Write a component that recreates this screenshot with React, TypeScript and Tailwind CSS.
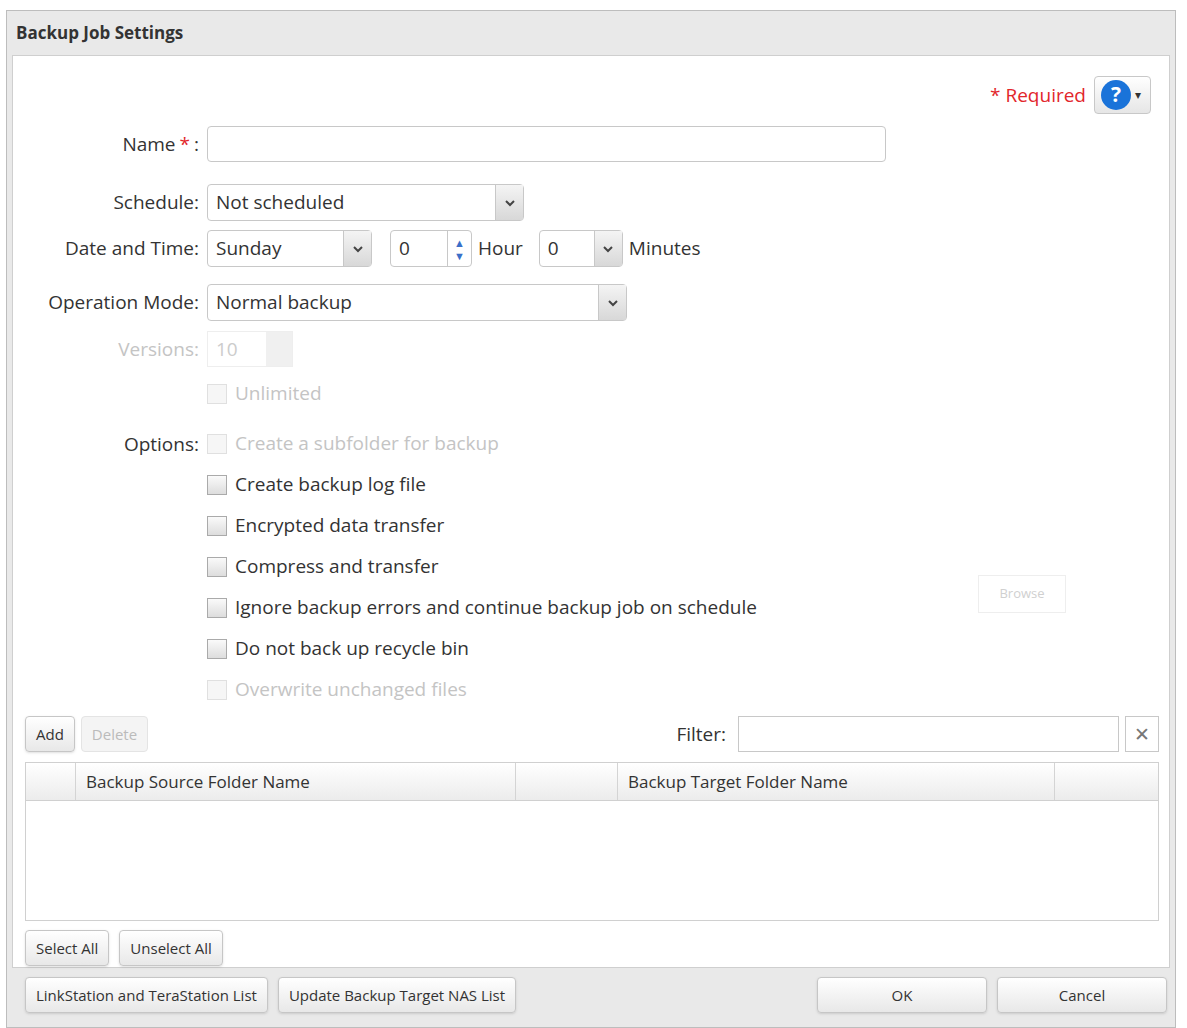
import React from "react";

const Chev = () => (
    <svg width="12" height="8" viewBox="0 0 12 8"><path d="M2 2l4 4 4-4" stroke="#444" strokeWidth="2" fill="none"/></svg>
);

const Select = ({value, w}: {value: string, w: string}) => (
    <div className={`flex h-[37px] ${w} border border-[#c8c8c8] rounded-sm bg-white`}>
        <span className="flex-1 flex items-center pl-2 text-[#333]">{value}</span>
        <span className="w-[28px] flex items-center justify-center bg-gradient-to-b from-[#f4f4f4] to-[#d8d8d8] border-l border-[#c8c8c8]"><Chev/></span>
    </div>
);

const Check = ({label, disabled}: {label: string, disabled?: boolean}) => (
    <div className={`flex items-center gap-[8px] h-[41px] ${disabled ? "text-[#c4c4c4]" : "text-[#333]"}`}>
        <span className={`w-[20px] h-[20px] border ${disabled ? "border-[#e0e0e0] bg-[#f6f6f6]" : "border-[#aaa] bg-gradient-to-b from-[#fafafa] to-[#ddd]"}`}/>
        {label}
    </div>
);

const Btn = ({children, w, disabled}: {children: React.ReactNode, w?: string, disabled?: boolean}) => (
    <button className={`h-[36px] px-[10px] ${w ?? ""} border rounded-sm text-[15px] ${disabled ? "border-[#e4e4e4] text-[#bbb] bg-[#f4f4f4]" : "border-[#c6c6c6] text-[#333] bg-gradient-to-b from-white to-[#e8e8e8] shadow-sm"}`}>{children}</button>
);

export default function App() {
    return (
        <div className="w-[1187px] h-[1028px] bg-white pt-[10px] pl-[6px] pr-[11px]" style={{fontFamily: '"Open Sans", "Noto Sans", sans-serif'}}>
            <div className="h-[1018px] bg-[#e9e9e9] border border-[#bdbdbd] flex flex-col">
                <div className="h-[44px] flex items-center pl-[9px] font-bold text-[17px] text-[#333]">Backup Job Settings</div>
                <div className="mx-[5px] h-[913px] bg-white border border-[#cfcfcf] relative text-[19px] text-[#333]">
                    <div className="flex justify-end items-center gap-[8px] pt-[18px] pr-[18px] h-[60px]">
                        <span className="text-[#e2262b]">* Required</span>
                        <span className="flex items-center gap-[4px] h-[38px] w-[57px] px-[6px] border border-[#c8c8c8] rounded bg-gradient-to-b from-white to-[#e6e6e6]">
                            <span className="w-[30px] h-[30px] rounded-full bg-[#1a73d9] text-white font-bold text-[21px] flex items-center justify-center">?</span>
                            <span className="text-[12px]">▾</span>
                        </span>
                    </div>
                    <div className="grid grid-cols-[186px_1fr] gap-x-[8px] items-center">
                        <div className="text-right h-[36px] mt-[10px] flex items-center justify-end">Name <span className="text-[#e2262b] mx-[4px]">*</span>:</div>
                        <div className="mt-[10px] h-[36px] w-[679px] border border-[#c8c8c8] rounded-sm"/>
                        <div className="text-right mt-[22px]">Schedule:</div>
                        <div className="mt-[22px]"><Select value="Not scheduled" w="w-[317px]"/></div>
                        <div className="text-right mt-[9px]">Date and Time:</div>
                        <div className="mt-[9px] flex items-center gap-[6px]">
                            <Select value="Sunday" w="w-[165px]"/>
                            <div className="ml-[12px] flex h-[37px] w-[82px] border border-[#c8c8c8] rounded-sm">
                                <span className="flex-1 flex items-center pl-2">0</span>
                                <span className="w-[24px] flex flex-col items-center justify-center border-l border-[#c8c8c8] text-[#3a6fc9] text-[11px] leading-[13px]"><span>▲</span><span>▼</span></span>
                            </div>
                            <span>Hour</span>
                            <div className="ml-[10px]"><Select value="0" w="w-[84px]"/></div>
                            <span>Minutes</span>
                        </div>
                        <div className="text-right mt-[17px]">Operation Mode:</div>
                        <div className="mt-[17px]"><Select value="Normal backup" w="w-[420px]"/></div>
                        <div className="text-right mt-[10px] text-[#c4c4c4]">Versions:</div>
                        <div className="mt-[10px] flex h-[36px] w-[86px] border border-[#eee] text-[#ccc]"><span className="flex-1 pl-2 flex items-center">10</span><span className="w-[26px] bg-[#f0f0f0]"/></div>
                        <div/>
                        <div className="mt-[6px]"><Check label="Unlimited" disabled/></div>
                        <div className="text-right self-start mt-[16px]">Options:</div>
                        <div className="mt-[9px]">
                            <Check label="Create a subfolder for backup" disabled/>
                            <Check label="Create backup log file"/>
                            <Check label="Encrypted data transfer"/>
                            <Check label="Compress and transfer"/>
                            <Check label="Ignore backup errors and continue backup job on schedule"/>
                            <Check label="Do not back up recycle bin"/>
                            <Check label="Overwrite unchanged files" disabled/>
                        </div>
                    </div>
                    <div className="absolute left-[965px] top-[519px]"><button className="h-[38px] w-[88px] border border-[#eee] text-[#d0d0d0] text-[13px]">Browse</button></div>
                    <div className="flex items-center pl-[12px] pr-[10px] mt-[6px] gap-[6px]">
                        <Btn>Add</Btn>
                        <Btn disabled>Delete</Btn>
                        <span className="ml-auto mr-[6px]">Filter:</span>
                        <div className="h-[36px] w-[381px] border border-[#c8c8c8]"/>
                        <span className="h-[36px] w-[34px] border border-[#c8c8c8] flex items-center justify-center text-[#777]">✕</span>
                    </div>
                    <div className="ml-[12px] mr-[10px] mt-[10px] h-[159px] border border-[#d0d0d0]">
                        <div className="h-[38px] flex bg-gradient-to-b from-white to-[#ececec] border-b border-[#d0d0d0] text-[17px]">
                            <div className="w-[50px] border-r border-[#d4d4d4]"/>
                            <div className="w-[440px] pl-[10px] flex items-center border-r border-[#d4d4d4]">Backup Source Folder Name</div>
                            <div className="w-[102px] border-r border-[#d4d4d4]"/>
                            <div className="w-[437px] pl-[10px] flex items-center border-r border-[#d4d4d4]">Backup Target Folder Name</div>
                            <div className="flex-1"/>
                        </div>
                    </div>
                    <div className="flex gap-[10px] pl-[12px] mt-[9px]">
                        <Btn>Select All</Btn>
                        <Btn>Unselect All</Btn>
                    </div>
                </div>
                <div className="flex items-center gap-[10px] pl-[18px] pr-[8px] pt-[9px]">
                    <Btn>LinkStation and TeraStation List</Btn>
                    <Btn>Update Backup Target NAS List</Btn>
                    <div className="flex-1"/>
                    <Btn w="w-[170px]">OK</Btn>
                    <Btn w="w-[170px]">Cancel</Btn>
                </div>
            </div>
        </div>
    );
}
